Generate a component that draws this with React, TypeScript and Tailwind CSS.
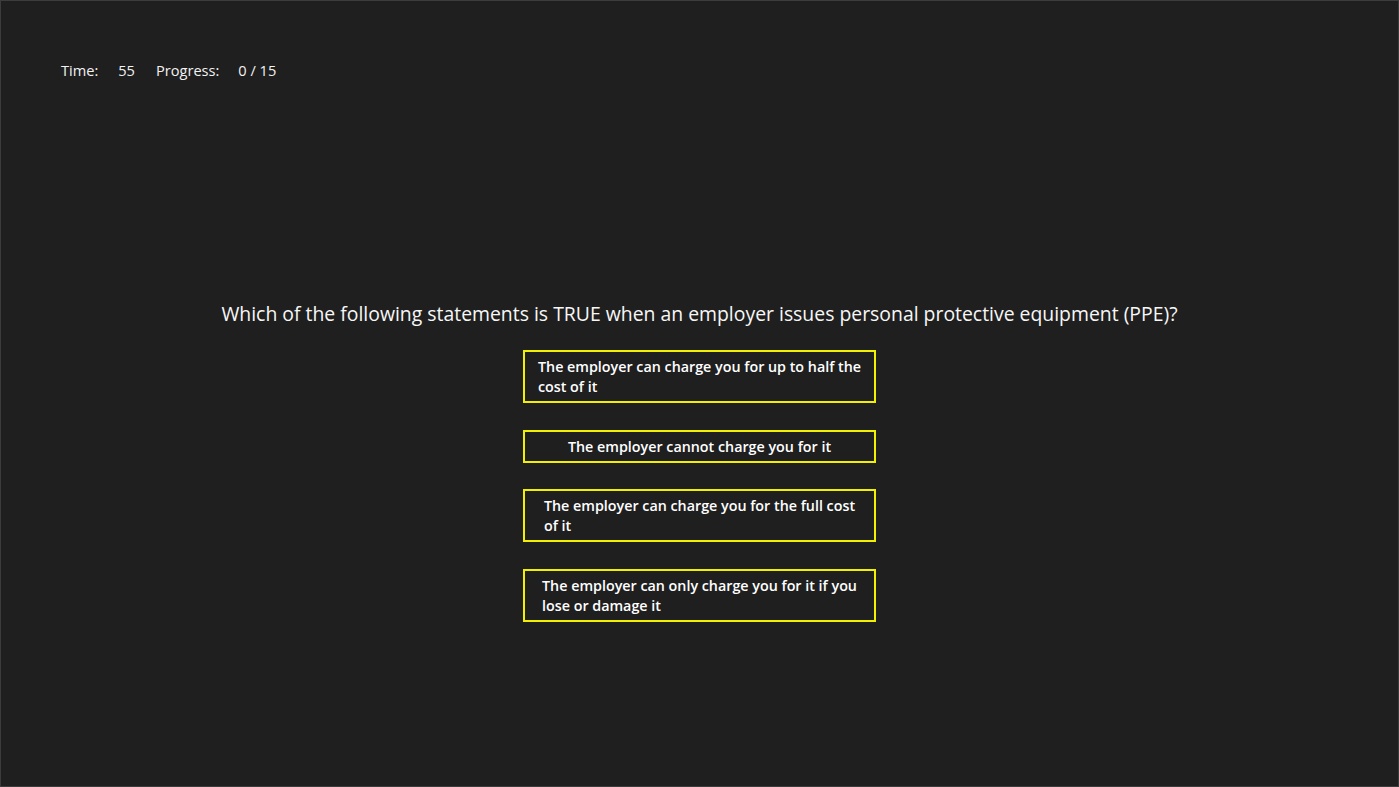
const answers: string[][] = [
  ["The employer can charge you for up to half the", "cost of it"],
  ["The employer cannot charge you for it"],
  ["The employer can charge you for the full cost", "of it"],
  ["The employer can only charge you for it if you", "lose or damage it"],
];

export default function App() {
  return (
    <div
      className="h-[787px] w-[1399px] overflow-hidden border border-[#3c3c3c] bg-[#1f1f1f] text-white"
      style={{ fontFamily: '"Segoe UI", "Open Sans", "Noto Sans", sans-serif' }}
    >
      {/* Status bar */}
      <div className="flex items-center pl-[60px] pt-[59px] text-[14.6px] leading-[20px] text-[#f2f2f2]">
        <span>Time:</span>
        <span className="ml-[20px]">55</span>
        <span className="ml-[21px]">Progress:</span>
        <span className="ml-[19px]">0 / 15</span>
      </div>

      {/* Question */}
      <div className="mt-[220px] flex flex-col items-center">
        <h1 className="text-[19.4px] leading-[27px] font-normal text-[#f7f7f7]">
          Which of the following statements is TRUE when an employer issues personal protective equipment (PPE)?
        </h1>

        <div className="mt-[23px] flex flex-col items-center gap-[26.5px]">
          {answers.map((lines) => (
            <button
              key={lines[0]}
              className="flex w-[353px] justify-center border-2 border-[#f0f000] bg-[#1f1f1f] pt-[5px] pb-[4px] text-[14.3px] leading-[20px] font-semibold text-white"
            >
              <span className="inline-block text-left">
                {lines.map((line, i) => (
                  <span key={i} className="block">
                    {line}
                  </span>
                ))}
              </span>
            </button>
          ))}
        </div>
      </div>
    </div>
  );
}
